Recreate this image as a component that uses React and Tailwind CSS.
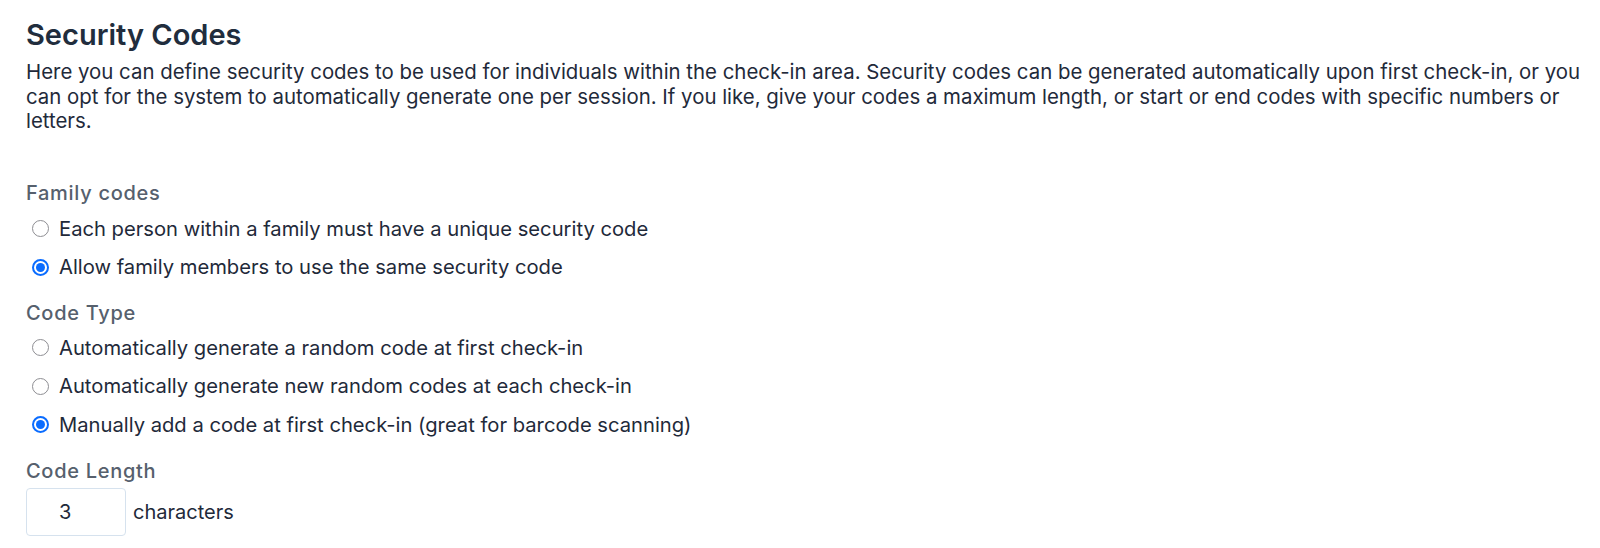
import { useState } from "react";

const Radio = ({ checked, label, onClick }) => {
  return (
    <label
      className="flex h-[38.5px] cursor-pointer items-center pl-[6px]"
      onClick={onClick}
    >
      <span
        className={`${
          checked ? "border-2 border-[#0a6cff]" : "border border-[#8e8e93]"
        } flex h-[17px] w-[17px] shrink-0 items-center justify-center rounded-full bg-white`}
      >
        {checked ? <span className="h-[9px] w-[9px] rounded-full bg-[#0a6cff]"></span> : null}
      </span>
      <span className="ml-[10px] text-[20.2px] text-[#1f2a3a]">{label}</span>
    </label>
  );
};

const App = () => {
  const [family, setFamily] = useState("same");
  const [codeType, setCodeType] = useState("manual");
  const [length, setLength] = useState("3");

  return (
    <div
      className="min-h-screen bg-white pl-[26px] pr-3 pt-[18px]"
      style={{ fontFamily: "Inter, 'Noto Sans', sans-serif" }}
    >
      <h2 className="text-[29px] font-semibold leading-[34px] text-[#212d3d]">
        Security Codes
      </h2>
      <p className="mt-[8px] text-[20.4px] leading-[24.5px] text-[#1f2a3a]">
        Here you can define security codes to be used for individuals within the
        check-in area. Security codes can be generated automatically upon first
        check-in, or you can opt for the system to automatically generate one per
        session. If you like, give your codes a maximum length, or start or end
        codes with specific numbers or letters.
      </p>

      <div className="mt-[47px] text-[20px] font-medium leading-6 tracking-[0.7px] text-[#56606d]">
        Family codes
      </div>
      <div className="mt-[5px]">
        <Radio
          checked={family === "unique"}
          label="Each person within a family must have a unique security code"
          onClick={() => setFamily("unique")}
        />
        <Radio
          checked={family === "same"}
          label="Allow family members to use the same security code"
          onClick={() => setFamily("same")}
        />
      </div>

      <div className="mt-[14px] text-[20px] font-medium leading-6 tracking-[0.7px] text-[#56606d]">
        Code Type
      </div>
      <div className="mt-[4px]">
        <Radio
          checked={codeType === "first"}
          label="Automatically generate a random code at first check-in"
          onClick={() => setCodeType("first")}
        />
        <Radio
          checked={codeType === "each"}
          label="Automatically generate new random codes at each check-in"
          onClick={() => setCodeType("each")}
        />
        <Radio
          checked={codeType === "manual"}
          label="Manually add a code at first check-in (great for barcode scanning)"
          onClick={() => setCodeType("manual")}
        />
      </div>

      <div className="mt-[15px] text-[20px] font-medium leading-6 tracking-[0.7px] text-[#56606d]">
        Code Length
      </div>
      <div className="mt-[5px] flex items-center">
        <input
          className="h-12 w-[100px] rounded border border-[#d6e2ee] pl-[32px] pr-3 text-[20px] text-[#1f2a3a] outline-none"
          value={length}
          onChange={(e) => setLength(e.target.value)}
        />
        <span className="ml-[7px] text-[20px] text-[#1f2a3a]">characters</span>
      </div>
    </div>
  );
};

export default App;
